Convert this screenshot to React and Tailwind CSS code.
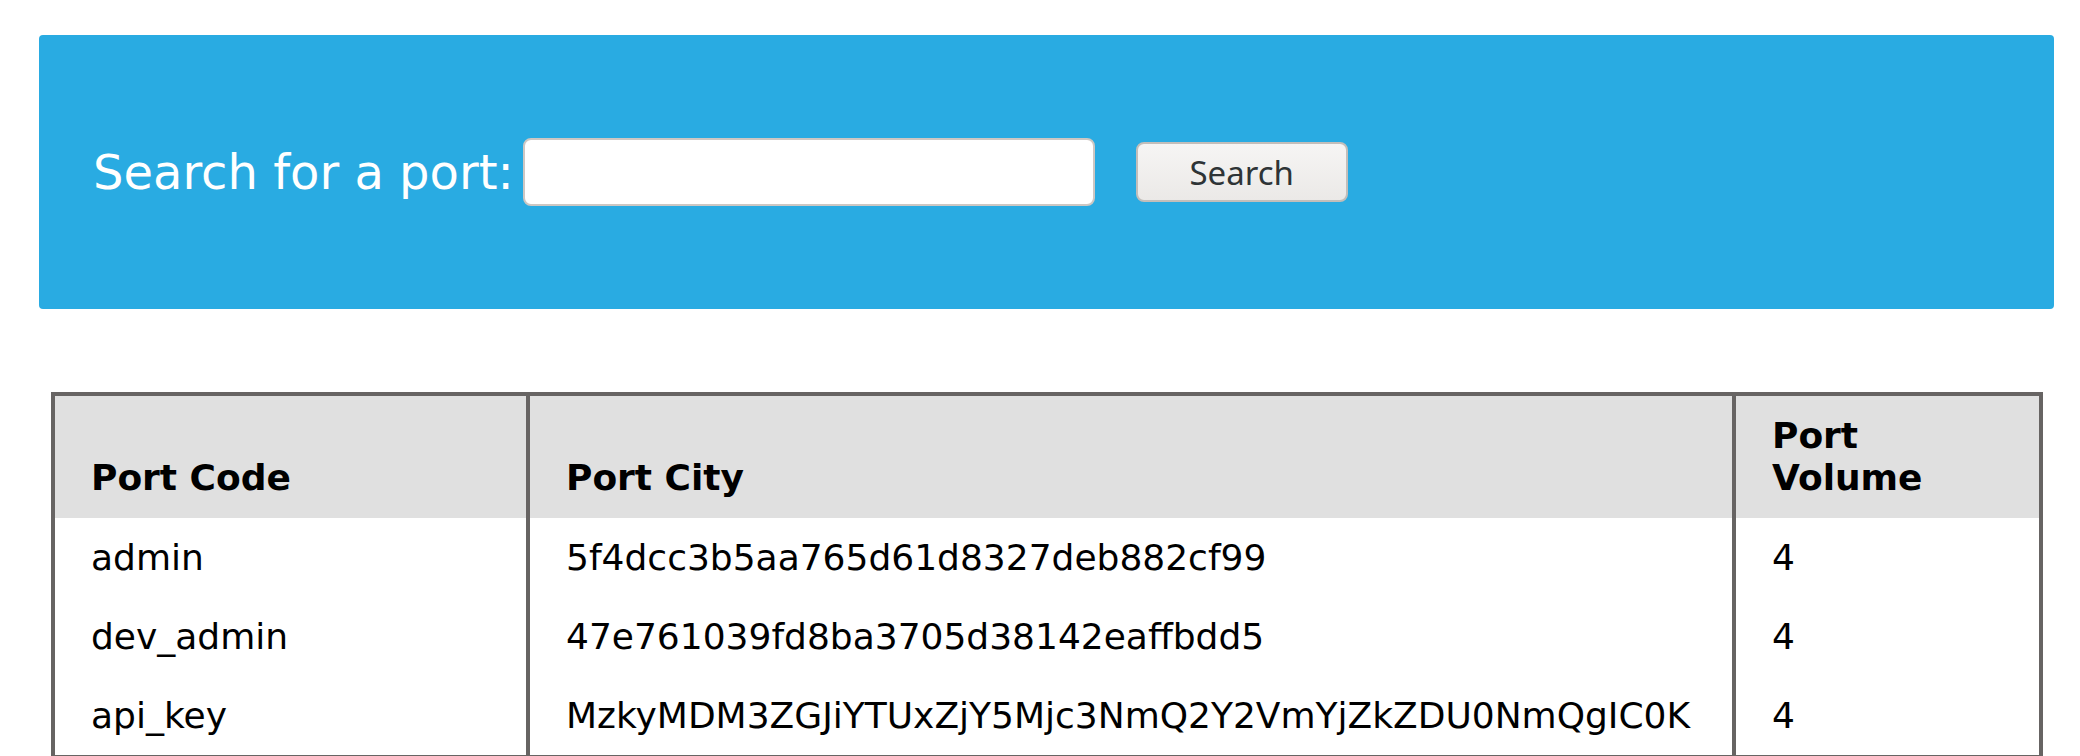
import { useState } from "react";

const ports = [
  { code: "admin", city: "5f4dcc3b5aa765d61d8327deb882cf99", volume: 4 },
  { code: "dev_admin", city: "47e761039fd8ba3705d38142eaffbdd5", volume: 4 },
  { code: "api_key", city: "MzkyMDM3ZGJiYTUxZjY5Mjc3NmQ2Y2VmYjZkZDU0NmQgIC0K", volume: 4 },
];

export default function App() {
  const [search, setSearch] = useState("");

  return (
    <div className="w-[2080px] h-[756px] overflow-hidden bg-white pt-[35px] pl-[39px] font-['DejaVu_Sans',sans-serif] text-black">
      {/* Search bar */}
      <div className="w-[2015px] h-[274px] rounded-[4px] bg-[#29abe2] flex items-center pl-[54px]">
        <label className="text-[48px] text-white leading-[56px]">Search for a port:</label>
        <input
          type="text"
          value={search}
          onChange={(e) => setSearch(e.target.value)}
          className="ml-[9px] w-[572px] h-[68px] bg-white border-2 border-[#cdc7c3] rounded-[8px] outline-none px-3 text-[32px]"
        />
        <button className="ml-[41px] w-[212px] h-[60px] rounded-[8px] border-2 border-[#c3beba] bg-gradient-to-b from-[#f6f5f4] to-[#ebe9e7] text-[#2e3436] text-[33px] leading-none font-['Noto_Sans',sans-serif]">
          Search
        </button>
      </div>

      {/* Results */}
      <table className="mt-[83px] ml-[12px] w-[1992px] table-fixed border-separate border-spacing-0 border-4 border-[#676463]">
        <colgroup>
          <col className="w-[471px]" />
          <col className="w-[1206px]" />
          <col className="w-[307px]" />
        </colgroup>
        <thead>
          <tr className="bg-[#e0e0e0]">
            <th className="align-bottom text-left px-[36px] py-[19px] text-[36px] leading-[42px] font-bold">Port Code</th>
            <th className="align-bottom text-left px-[36px] py-[19px] text-[36px] leading-[42px] font-bold border-l-4 border-[#676463]">Port City</th>
            <th className="align-bottom text-left px-[36px] py-[19px] text-[36px] leading-[42px] font-bold border-l-4 border-[#676463]">Port Volume</th>
          </tr>
        </thead>
        <tbody>
          {ports.map((p) => (
            <tr key={p.code}>
              <td className="px-[36px] py-[18px] text-[36px] leading-[43px]">{p.code}</td>
              <td className="px-[36px] py-[18px] text-[36px] leading-[43px] border-l-4 border-[#676463] whitespace-nowrap">{p.city}</td>
              <td className="px-[36px] py-[18px] text-[36px] leading-[43px] border-l-4 border-[#676463]">{p.volume}</td>
            </tr>
          ))}
        </tbody>
      </table>
    </div>
  );
}
